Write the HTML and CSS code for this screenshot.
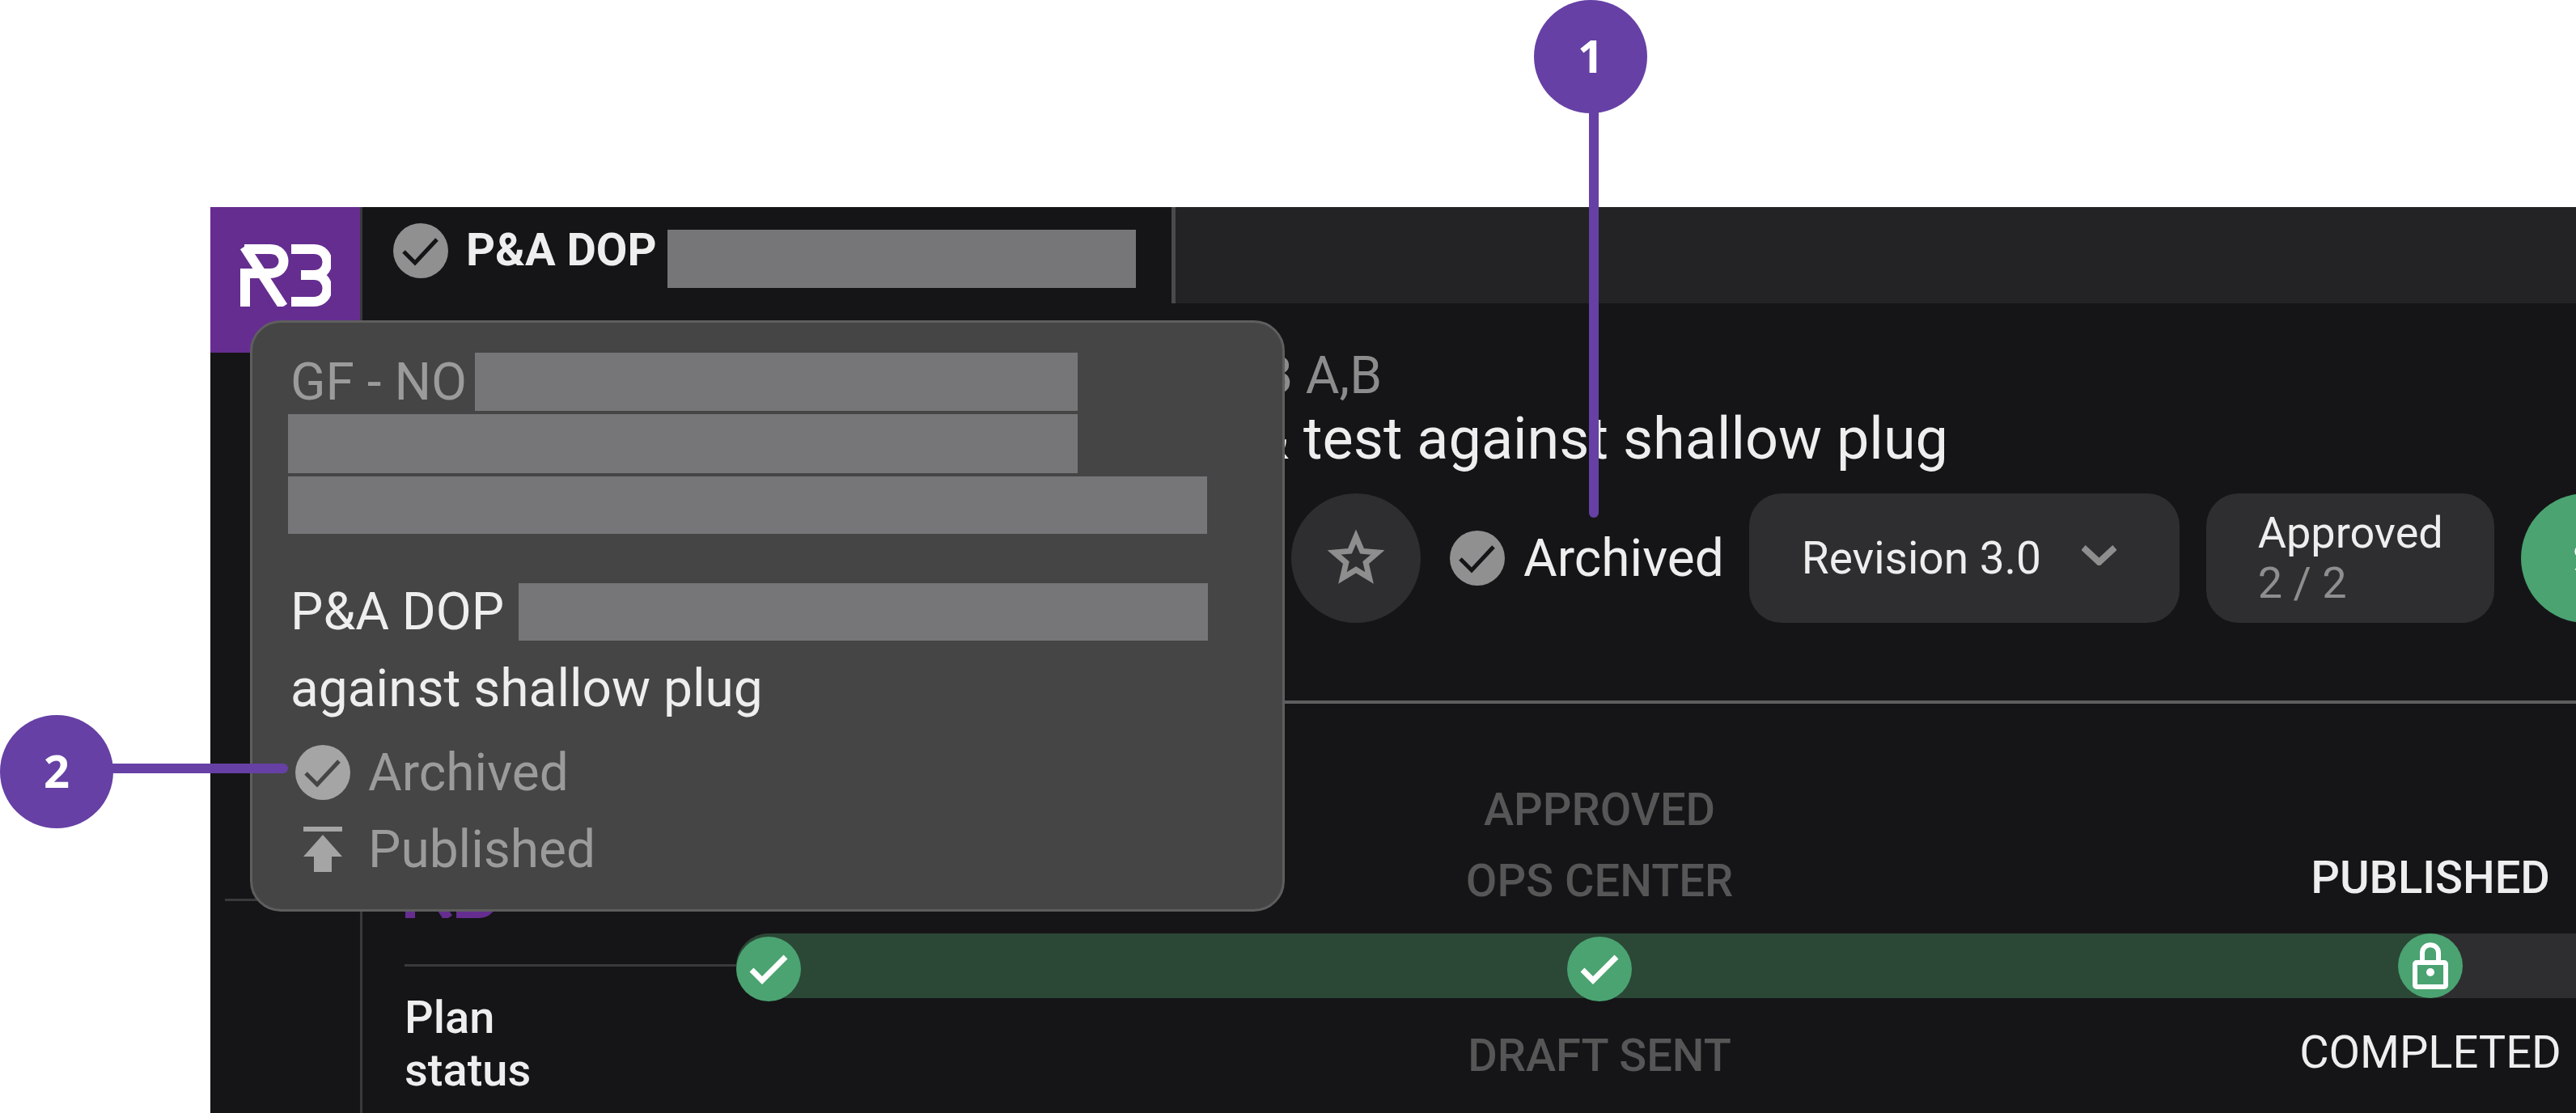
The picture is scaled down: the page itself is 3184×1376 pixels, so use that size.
FILE: index.html
```html
<!DOCTYPE html>
<html lang="en">

<head>
  <meta charset="UTF-8">
  <title>Plan header</title>
  <link rel="stylesheet" href="styles.css">
</head>

<body>
  <div class="app">
    <aside class="sidebar">
      <div class="logo">
        <svg viewBox="0 0 113 77" width="113" height="77" fill="none" stroke="#fff" stroke-width="12">
          <path d="M7 77V36H38C60 36 60 6 38 6H6"/>
          <path d="M6 3L54 77"/>
          <path d="M64 6H92C114 6 114 38 92 38H76M92 38C114 38 114 71 92 71H64"/>
        </svg>
      </div>
      <div class="sidebar-rule"></div>
    </aside>

    <main class="main">
      <div class="tabbar">
        <div class="tab">
          <svg class="check-icon" viewBox="0 0 68 68" width="68" height="68">
            <circle cx="34" cy="34" r="34" fill="#909090"/>
            <path d="M13 35L27 49L54 20" fill="none" stroke="#151517" stroke-width="5"/>
          </svg>
          <span class="tab-title">P&amp;A DOP</span>
          <span class="redact tab-redact"></span>
        </div>
      </div>

      <header class="plan-head">
        <div class="plan-code">GF - NO B A,B</div>
        <div class="plan-name">P&amp;A DOP &amp; test against shallow plug</div>
        <div class="actions">
          <button class="star-btn">
            <svg viewBox="0 0 24 24" width="80" height="80" fill="#8e8e8e" stroke="#8e8e8e" stroke-width=".5">
              <path d="M22 9.24l-7.19-.62L12 2 9.19 8.63 2 9.24l5.46 4.73L5.82 21 12 17.27 18.18 21l-1.63-7.03L22 9.24zM12 15.4l-3.76 2.27 1-4.28-3.32-2.88 4.38-.38L12 6.1l1.71 4.04 4.38.38-3.32 2.88 1 4.28L12 15.4z"/>
            </svg>
          </button>
          <div class="state">
            <svg class="check-icon" viewBox="0 0 68 68" width="68" height="68">
              <circle cx="34" cy="34" r="34" fill="#909090"/>
              <path d="M13 35L27 49L54 20" fill="none" stroke="#151517" stroke-width="5"/>
            </svg>
            <span>Archived</span>
          </div>
          <button class="pill revision">
            <span>Revision 3.0</span>
            <svg class="chevron" viewBox="0 0 43 25" width="43" height="25" fill="none" stroke="#8e8e8e" stroke-width="8">
              <path d="M2 3L21.500 21L41 3"/>
            </svg>
          </button>
          <div class="pill approved">
            <span>Approved</span>
            <span class="approved-count">2 / 2</span>
          </div>
          <button class="go-btn">
            <svg viewBox="0 0 28 36" width="28" height="36" fill="none" stroke="#fff" stroke-width="5">
              <path d="M26 5C12 -1 2 4 3 11C4 18 25 18 25 26C25 33 12 36 2 30"/>
            </svg>
          </button>
        </div>
      </header>

      <section class="status">
        <div class="status-top">
          <div class="brand-mark">
            <svg viewBox="0 0 113 77" width="113" height="77" fill="none" stroke="#652d90" stroke-width="12">
              <path d="M7 77V36H38C60 36 60 6 38 6H6"/>
              <path d="M6 3L54 77"/>
              <path d="M64 6H92C114 6 114 38 92 38H76M92 38C114 38 114 71 92 71H64"/>
            </svg>
          </div>
          <div class="stage-row stage-row-top">
            <div class="stage"></div>
            <div class="stage stage-muted">APPROVED<br>OPS CENTER</div>
            <div class="stage stage-now">PUBLISHED</div>
          </div>
        </div>

        <div class="status-mid">
          <div class="status-rule"></div>
          <div class="track">
            <div class="track-fill"></div>
            <span class="node">
              <svg viewBox="0 0 80 80" width="80" height="80" fill="none" stroke="#fff" stroke-width="7"><path d="M19 41L32 54L61 25"/></svg>
            </span>
            <span class="node">
              <svg viewBox="0 0 80 80" width="80" height="80" fill="none" stroke="#fff" stroke-width="7"><path d="M19 41L32 54L61 25"/></svg>
            </span>
            <span class="node node-lock">
              <svg viewBox="0 0 80 80" width="80" height="80" fill="none" stroke="#fff" stroke-width="6">
                <rect x="21" y="36" width="38" height="30" rx="2"/>
                <path d="M30 36V24C30 11 50 11 50 24V36"/>
                <circle cx="40" cy="48" r="5" fill="#fff" stroke="none"/>
              </svg>
            </span>
          </div>
        </div>

        <div class="status-bottom">
          <div class="status-label">Plan<br>status</div>
          <div class="stage-row stage-row-bottom">
            <div class="stage"></div>
            <div class="stage stage-muted">DRAFT SENT</div>
            <div class="stage stage-done">COMPLETED</div>
          </div>
        </div>
      </section>
    </main>
  </div>

  <!-- popover over the app -->
  <div class="popover">
    <div class="pop-line pop-line-first">
      <span class="pop-code">GF - NO</span>
      <span class="redact redact-a"></span>
    </div>
    <div class="redact redact-b"></div>
    <div class="redact redact-c"></div>
    <div class="pop-line pop-line-name">
      <span>P&amp;A DOP</span>
      <span class="redact redact-d"></span>
    </div>
    <div class="pop-tail">against shallow plug</div>
    <div class="pop-state">
      <svg viewBox="0 0 68 68" width="68" height="68">
        <circle cx="34" cy="34" r="34" fill="#a5a5a5"/>
        <path d="M13 35L27 49L54 20" fill="none" stroke="#454545" stroke-width="5"/>
      </svg>
      <span>Archived</span>
    </div>
    <div class="pop-state pop-state-pub">
      <svg viewBox="0 0 48 56" width="48" height="56" fill="#a5a5a5">
        <path d="M0 0H48V6H0zM24 10L48 37H35V56H13V37H0z"/>
      </svg>
      <span>Published</span>
    </div>
  </div>

  <div class="callout callout-one">1</div>
  <div class="callout-line callout-line-one"></div>
  <div class="callout callout-two">2</div>
  <div class="callout-line callout-line-two"></div>
</body>

</html>
```

FILE: styles.css
```css
html,
body {
  margin: 0;
  height: 1376px;
  overflow: hidden;
  background: #fff;
}

body {
  position: relative;
  font-family: Roboto, "Liberation Sans", sans-serif;
  color: #eee;
}

button {
  border: 0;
  padding: 0;
  font: inherit;
  color: inherit;
}

.app {
  display: flex;
  margin: 256px 0 0 260px;
  height: 1120px;
  background: #151517;
}

.sidebar {
  flex: 0 0 185px;
  border-right: 3px solid #3a3a3c;
}

.logo {
  display: flex;
  align-items: center;
  justify-content: center;
  box-sizing: border-box;
  height: 180px;
  padding-bottom: 12px;
  background: #652d90;
}

.sidebar-rule {
  height: 3px;
  margin: 675px 0 0 18px;
  background: #3a3a3c;
}

.main {
  flex: 1;
  min-width: 0;
  overflow: hidden;
}

.tabbar {
  height: 119px;
  background: #232325;
}

.tab {
  display: flex;
  align-items: flex-start;
  box-sizing: border-box;
  width: 1005px;
  height: 119px;
  padding: 20px 0 0 38px;
  background: #151517;
  border-right: 5px solid #4a4a4c;
}

.tab-title {
  margin: 0 13px 0 22px;
  font-size: 56px;
  line-height: 66px;
  font-weight: 700;
}

.redact {
  display: block;
  background: #767578;
}

.tab-redact {
  width: 579px;
  height: 72px;
  margin-top: 8px;
}

.plan-head {
  height: 495px;
  margin-left: 52px;
  box-sizing: border-box;
  border-bottom: 4px solid #5e5e5e;
  padding-top: 50px;
  white-space: nowrap;
}

.plan-code {
  width: 1208px;
  text-align: right;
  font-size: 64px;
  line-height: 80px;
  color: #8c8c8c;
}

.plan-name {
  width: 1908px;
  text-align: right;
  font-size: 72px;
  line-height: 76px;
}

.actions {
  display: flex;
  margin: 29px 0 0 1096px;
  align-items: center;
  gap: 33px;
  height: 160px;
}

.actions > * {
  flex: none;
}

.star-btn,
.go-btn {
  display: flex;
  align-items: center;
  justify-content: center;
  width: 160px;
  height: 160px;
  border-radius: 50%;
  background: #2e2e30;
}

.go-btn {
  justify-content: flex-start;
  padding-left: 66px;
  background: #4aa371;
}

.state {
  display: flex;
  align-items: center;
  gap: 23px;
  margin: 0 -2px 0 3px;
  font-size: 64px;
}

.pill {
  display: flex;
  height: 160px;
  box-sizing: border-box;
  border-radius: 40px;
  background: #2e2e30;
  font-size: 55px;
}

.revision {
  align-items: center;
  width: 532px;
  padding: 0 0 0 65px;
  gap: 50px;
}

.chevron {
  margin-top: -8px;
}

.approved {
  flex-direction: column;
  justify-content: center;
  width: 356px;
  padding-left: 64px;
  font-size: 54px;
  line-height: 62px;
}

.approved-count {
  color: #8e8e8e;
}

.status {
  margin-left: 52px;
}

.status-top {
  display: flex;
  height: 284px;
}

.brand-mark {
  align-self: flex-end;
  flex: 0 0 450px;
  margin-bottom: 15px;
}

.stage-row {
  display: flex;
  flex: 1;
  min-width: 0;
  gap: 1027px;
}

.stage-row-top {
  align-items: flex-end;
}

.stage {
  flex: 0 0 0;
  min-width: 0;
  display: flex;
  justify-content: center;
  text-align: center;
  white-space: nowrap;
  font-size: 56px;
  line-height: 88px;
  font-weight: 500;
}

.stage-muted {
  color: #565656;
}

.stage-now,
.stage-done {
  color: #eee;
}

.stage-row-top .stage-muted {
  margin-bottom: 21px;
}

.stage-row-top .stage-now {
  margin-bottom: 25px;
}

.stage-row-bottom .stage-muted {
  margin-top: 27px;
}

.stage-row-bottom .stage-done {
  margin-top: 23px;
  font-weight: 400;
}

.status-mid {
  display: flex;
  height: 80px;
}

.status-rule {
  flex: 0 0 410px;
  height: 3px;
  margin-top: 38px;
  background: #3a3a3c;
}

.track {
  position: relative;
  flex: 1;
  min-width: 0;
  display: flex;
  gap: 947px;
  border-radius: 40px 0 0 40px;
  background: #2e2e30;
}

.track-fill {
  position: absolute;
  left: 0;
  top: 0;
  width: 2094px;
  height: 80px;
  border-radius: 40px 0 0 40px;
  background: #2b4735;
}

.node {
  position: relative;
  flex: 0 0 80px;
  height: 80px;
  margin-top: 4px;
  border-radius: 50%;
  background: #4aa371;
}

.node-lock {
  margin-top: 0;
}

.status-bottom {
  display: flex;
}

.status-label {
  flex: 0 0 450px;
  margin-top: -8px;
  font-size: 56px;
  line-height: 65px;
  font-weight: 500;
}

.popover {
  position: absolute;
  left: 309px;
  top: 396px;
  box-sizing: border-box;
  width: 1279px;
  height: 731px;
  padding: 37px 0 0 44px;
  border: 3px solid #5e5e5e;
  border-radius: 38px;
  background: #454545;
  white-space: nowrap;
}

.pop-line {
  display: flex;
  align-items: center;
}

.pop-line-first {
  font-size: 64px;
  color: #9b9b9b;
  margin-left: 3px;
  height: 72px;
}

.redact-a {
  width: 745px;
  height: 72px;
  margin-left: 10px;
}

.redact-b {
  width: 976px;
  height: 73px;
  margin-top: 4px;
}

.redact-c {
  width: 1136px;
  height: 71px;
  margin-top: 4px;
}

.pop-line-name {
  margin: 61px 0 0 3px;
  font-size: 64px;
  height: 71px;
}

.redact-d {
  width: 852px;
  height: 71px;
  margin-left: 18px;
}

.pop-tail {
  margin: 22px 0 0 3px;
  font-size: 64px;
  line-height: 76px;
}

.pop-state {
  display: flex;
  align-items: center;
  gap: 22px;
  margin: 30px 0 0 9px;
  height: 70px;
  font-size: 64px;
  color: #9b9b9b;
}

.pop-state-pub {
  margin-left: 19px;
  gap: 32px;
  margin-top: 25px;
}

.callout {
  position: absolute;
  display: flex;
  align-items: center;
  justify-content: center;
  box-sizing: border-box;
  width: 140px;
  height: 140px;
  padding-bottom: 4px;
  border-radius: 50%;
  background: #6640a5;
  color: #fff;
  font-family: "Open Sans", sans-serif;
  font-size: 56px;
  font-weight: 700;
}

.callout-one {
  left: 1896px;
  top: 0;
}

.callout-two {
  left: 0;
  top: 884px;
}

.callout-line {
  position: absolute;
  background: #6640a5;
}

.callout-line-one {
  left: 1964px;
  top: 130px;
  width: 12px;
  height: 510px;
  border-radius: 0 0 6px 6px;
}

.callout-line-two {
  left: 130px;
  top: 944px;
  width: 226px;
  height: 12px;
  border-radius: 0 6px 6px 0;
}
```
